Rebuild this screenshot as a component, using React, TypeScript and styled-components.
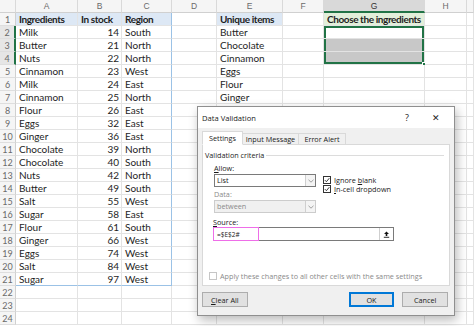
import React from 'react';
import styled, { createGlobalStyle } from 'styled-components';

const GlobalStyle = createGlobalStyle`
  html, body { margin: 0; padding: 0; background: #ffffff; }
  body { width: 474px; height: 326px; overflow: hidden; }
  * { box-sizing: border-box; }
`;

const Page = styled.div`
  position: relative;
  width: 474px;
  height: 326px;
  overflow: hidden;
  background: #fff;
`;

const Sheet = styled.div`
  display: grid;
  grid-template-columns: 16px 62px 44px 50px 45px 66px 41px 101px 42px 1fr;
  grid-auto-rows: 13px;
  font-family: Lato, 'Liberation Sans', sans-serif;
  font-size: 10px;
  color: #1e1e1e;
`;

const ColHead = styled.div<{ $sel?: boolean }>`
  display: flex;
  align-items: center;
  justify-content: center;
  background: ${p => (p.$sel ? '#d9d9d9' : '#f5f5f5')};
  border-right: 1px solid #d9d9d9;
  border-bottom: ${p => (p.$sel ? '2px solid #217346' : '1px solid #d0d0d0')};
  color: ${p => (p.$sel ? '#333' : '#6a6a6a')};
  font-size: 8.5px;
  font-family: 'Liberation Sans', sans-serif;
`;

const RowHead = styled.div<{ $sel?: boolean }>`
  display: flex;
  align-items: center;
  justify-content: center;
  background: ${p => (p.$sel ? '#e6e6e6' : '#f5f5f5')};
  border-right: ${p => (p.$sel ? '2px solid #217346' : '1px solid #d0d0d0')};
  border-bottom: 1px solid #dedede;
  color: #6a6a6a;
  font-size: 9px;
`;

type Edge = 'top' | 'right' | 'bottom' | 'left';

const Cell = styled.div<{
  $bold?: boolean;
  $right?: boolean;
  $bg?: string;
  $rb?: string;
  $bb?: string;
  $sel?: Edge[];
}>`
  position: relative;
  display: flex;
  align-items: center;
  justify-content: ${p => (p.$right ? 'flex-end' : 'flex-start')};
  padding: 0 2px 0 3px;
  white-space: nowrap;
  overflow: visible;
  font-weight: ${p => (p.$bold ? 700 : 400)};
  letter-spacing: ${p => (p.$bold ? '-0.4px' : '0')};
  background: ${p => p.$bg || '#fff'};
  border-right: 1px solid ${p => p.$rb || '#e3e3e3'};
  border-bottom: 1px solid ${p => p.$bb || '#e3e3e3'};
  box-shadow: ${p =>
    p.$sel && p.$sel.length
      ? p.$sel
          .map(e =>
            e === 'top'
              ? 'inset 0 2px 0 #217346'
              : e === 'bottom'
              ? 'inset 0 -2px 0 #217346'
              : e === 'left'
              ? 'inset 2px 0 0 #217346'
              : 'inset -2px 0 0 #217346'
          )
          .join(', ')
      : 'none'};
  z-index: ${p => (p.$bold ? 1 : 0)};
`;

const FillHandle = styled.span`
  position: absolute;
  right: -3px;
  bottom: -3px;
  width: 5px;
  height: 5px;
  background: #217346;
  border: 1px solid #fff;
  z-index: 2;
`;

/* ---------- Dialog ---------- */

const Dialog = styled.div`
  position: absolute;
  left: 197px;
  top: 106px;
  width: 258px;
  height: 210px;
  background: #f0f0f0;
  border: 1px solid #8f8f8f;
  box-shadow: 2px 4px 10px rgba(0, 0, 0, 0.28);
  display: flex;
  flex-direction: column;
  font-family: 'Open Sans', 'Noto Sans', sans-serif;
  font-size: 7.25px;
  color: #1a1a1a;
  z-index: 10;
`;

const TitleBar = styled.div`
  height: 21px;
  flex: none;
  background: #ffffff;
  display: flex;
  align-items: center;
  padding-left: 4px;
  font-size: 7.6px;
`;

const Title = styled.span`
  flex: 1;
`;

const TitleBtn = styled.span<{ $w: number }>`
  width: ${p => p.$w}px;
  display: flex;
  justify-content: center;
  align-items: center;
  font-size: 9px;
  color: #222;
`;

const Tabs = styled.div`
  display: flex;
  align-items: flex-end;
  margin: 3px 0 0 4px;
  height: 14px;
  flex: none;
  position: relative;
  z-index: 1;
`;

const Tab = styled.div<{ $active?: boolean; $w: number }>`
  width: ${p => p.$w}px;
  height: ${p => (p.$active ? 14 : 12)}px;
  display: flex;
  align-items: center;
  justify-content: center;
  background: ${p => (p.$active ? '#ffffff' : '#f0f0f0')};
  border: 1px solid #d9d9d9;
  border-left: ${p => (p.$active ? '1px solid #d9d9d9' : 'none')};
  border-bottom: ${p => (p.$active ? '1px solid #ffffff' : '1px solid #d9d9d9')};
`;

const Panel = styled.div`
  margin: -1px 4px 0 4px;
  height: 142px;
  flex: none;
  background: #ffffff;
  border: 1px solid #d9d9d9;
  display: flex;
  flex-direction: column;
  padding: 5px 3px 4px 2px;
`;

const Legend = styled.div`
  display: flex;
  align-items: center;
  height: 10px;
  gap: 2px;
  &::after {
    content: '';
    flex: 1;
    height: 1px;
    background: #dcdcdc;
    margin-right: 2px;
  }
`;

const Criteria = styled.div`
  display: flex;
  gap: 7px;
  padding-left: 9px;
  margin-top: 3px;
`;

const LeftCol = styled.div`
  display: flex;
  flex-direction: column;
  width: 102px;
`;

const RightCol = styled.div`
  display: flex;
  flex-direction: column;
  padding-top: 12px;
`;

const Label = styled.div<{ $disabled?: boolean; $mt?: number }>`
  height: 10px;
  line-height: 10px;
  margin-top: ${p => p.$mt || 0}px;
  color: ${p => (p.$disabled ? '#8a8a8a' : '#1a1a1a')};
`;

const Select = styled.div<{ $disabled?: boolean }>`
  margin-top: 1px;
  height: 13px;
  display: flex;
  border: 1px solid ${p => (p.$disabled ? '#cccccc' : '#7a7a7a')};
  background: ${p => (p.$disabled ? '#f0f0f0' : '#ffffff')};
  color: ${p => (p.$disabled ? '#8a8a8a' : '#1a1a1a')};
`;

const SelectText = styled.span`
  flex: 1;
  padding-left: 2px;
  line-height: 11px;
`;

const SelectBtn = styled.span`
  width: 10px;
  border-left: 1px solid #cfcfcf;
  display: flex;
  align-items: center;
  justify-content: center;
  background: #f4f4f4;
`;

const Check = styled.label`
  display: flex;
  align-items: center;
  height: 9px;
  gap: 3px;
`;

const Box = styled.span<{ $disabled?: boolean }>`
  width: 8px;
  height: 8px;
  flex: none;
  border: 1px solid ${p => (p.$disabled ? '#c6c6c6' : '#333333')};
  background: #ffffff;
  display: flex;
  align-items: center;
  justify-content: center;
`;

const U = styled.span`
  text-decoration: underline;
  text-underline-offset: 1px;
`;

const SourceArea = styled.div`
  padding-left: 8px;
  margin-top: 4px;
  display: flex;
  flex-direction: column;
`;

const SourceBox = styled.div`
  width: 181px;
  height: 14px;
  background: #ffffff;
  border: 1px solid #7a7a7a;
  display: flex;
  align-items: stretch;
`;

const Highlight = styled.span`
  width: 46px;
  border: 1px solid #ee6ee8;
  margin: -1px 0 -1px -1px;
  display: flex;
  align-items: center;
  padding-left: 3px;
  font-size: 6.5px;
`;

const RefBtn = styled.span`
  margin-left: auto;
  width: 14px;
  border-left: 1px solid #cfcfcf;
  display: flex;
  align-items: center;
  justify-content: center;
`;

const ApplyRow = styled(Check)`
  margin-top: auto;
  margin-left: 4px;
  height: 10px;
  color: #8a8a8a;
`;

const Footer = styled.div`
  display: flex;
  align-items: center;
  padding: 6px 6px 0 4px;
`;

const Button = styled.div<{ $default?: boolean; $ml?: string }>`
  width: 47px;
  height: 15px;
  display: flex;
  align-items: center;
  justify-content: center;
  background: #e1e1e1;
  border: 1px solid ${p => (p.$default ? '#0078d7' : '#adadad')};
  box-shadow: ${p => (p.$default ? 'inset 0 0 0 1px #0078d7' : 'none')};
  margin-left: ${p => p.$ml || '0'};
`;

const Chevron = () => (
  <svg width="6" height="4" viewBox="0 0 6 4">
    <path d="M0.5 0.8 L3 3.2 L5.5 0.8" fill="none" stroke="#8a8a8a" strokeWidth="0.8" />
  </svg>
);

const Tick = () => (
  <svg width="6" height="6" viewBox="0 0 6 6">
    <path d="M0.8 3.1 L2.4 4.7 L5.3 1.2" fill="none" stroke="#222" strokeWidth="0.9" />
  </svg>
);

const CollapseIcon = () => (
  <svg width="7" height="7" viewBox="0 0 7 7">
    <path d="M3.5 0.5 L6 3 L4.3 3 L4.3 5 L2.7 5 L2.7 3 L1 3 Z" fill="#111" />
    <rect x="0.8" y="5.8" width="5.4" height="0.9" fill="#111" />
  </svg>
);

const data: [string, number, string][] = [
  ['Milk', 14, 'South'],
  ['Butter', 21, 'North'],
  ['Nuts', 22, 'North'],
  ['Cinnamon', 23, 'West'],
  ['Milk', 24, 'East'],
  ['Cinnamon', 25, 'North'],
  ['Flour', 26, 'East'],
  ['Eggs', 32, 'East'],
  ['Ginger', 36, 'East'],
  ['Chocolate', 39, 'North'],
  ['Chocolate', 40, 'South'],
  ['Nuts', 42, 'North'],
  ['Butter', 49, 'South'],
  ['Salt', 55, 'West'],
  ['Sugar', 58, 'East'],
  ['Flour', 61, 'South'],
  ['Ginger', 66, 'West'],
  ['Eggs', 74, 'West'],
  ['Salt', 84, 'West'],
  ['Sugar', 97, 'West'],
];

const unique = ['Butter', 'Chocolate', 'Cinnamon', 'Eggs', 'Flour', 'Ginger'];

const cols = ['', 'A', 'B', 'C', 'D', 'E', 'F', 'G', 'H', ''];
const BLUE = '#9bc2e6';
const HEAD_BLUE = '#dde8f5';
const HEAD_GREEN = '#e2efda';

export default function App() {
  const rows: React.ReactNode[] = [];
  for (let r = 1; r <= 24; r++) {
    const d = r >= 2 && r <= 21 ? data[r - 2] : null;
    const inTable = r <= 21;
    const tableBottom = r === 21 ? BLUE : undefined;
    const sel = r >= 2 && r <= 4;
    rows.push(
      <React.Fragment key={r}>
        <RowHead $sel={sel}>{r}</RowHead>
        <Cell $bold={r === 1} $bg={r === 1 ? HEAD_BLUE : undefined} $bb={tableBottom}>
          {r === 1 ? 'Ingredients' : d ? d[0] : ''}
        </Cell>
        <Cell $bold={r === 1} $right={r !== 1} $bg={r === 1 ? HEAD_BLUE : undefined} $bb={tableBottom}>
          {r === 1 ? 'In stock' : d ? d[1] : ''}
        </Cell>
        <Cell
          $bold={r === 1}
          $bg={r === 1 ? HEAD_BLUE : undefined}
          $bb={tableBottom}
          $rb={inTable ? BLUE : undefined}
        >
          {r === 1 ? 'Region' : d ? d[2] : ''}
        </Cell>
        <Cell />
        <Cell $bold={r === 1} $bg={r === 1 ? HEAD_BLUE : undefined}>
          {r === 1 ? 'Unique items' : r <= 7 ? unique[r - 2] : ''}
        </Cell>
        <Cell />
        <Cell
          $bold={r === 1}
          $bg={r === 1 ? HEAD_GREEN : r === 3 || r === 4 ? '#c8c8c8' : undefined}
          $sel={
            r === 2
              ? ['top', 'left', 'right']
              : r === 3
              ? ['left', 'right']
              : r === 4
              ? ['left', 'right', 'bottom']
              : undefined
          }
        >
          {r === 1 ? 'Choose the ingredients' : ''}
          {r === 4 && <FillHandle />}
        </Cell>
        <Cell />
        <Cell />
      </React.Fragment>
    );
  }

  return (
    <Page>
      <GlobalStyle />
      <Sheet>
        {cols.map((c, i) => (
          <ColHead key={i} $sel={c === 'G'}>
            {c}
          </ColHead>
        ))}
        {rows}
      </Sheet>

      <Dialog>
        <TitleBar>
          <Title>Data Validation</Title>
          <TitleBtn $w={22}>?</TitleBtn>
          <TitleBtn $w={36}>✕</TitleBtn>
        </TitleBar>
        <Tabs>
          <Tab $active $w={41}>Settings</Tab>
          <Tab $w={56}>Input Message</Tab>
          <Tab $w={47}>Error Alert</Tab>
        </Tabs>
        <Panel>
          <Legend>Validation criteria</Legend>
          <Criteria>
            <LeftCol>
              <Label>
                <U>A</U>llow:
              </Label>
              <Select>
                <SelectText>List</SelectText>
                <SelectBtn>
                  <Chevron />
                </SelectBtn>
              </Select>
              <Label $disabled $mt={2}>
                Data:
              </Label>
              <Select $disabled>
                <SelectText>between</SelectText>
                <SelectBtn>
                  <Chevron />
                </SelectBtn>
              </Select>
            </LeftCol>
            <RightCol>
              <Check>
                <Box>
                  <Tick />
                </Box>
                <span>
                  Ignore <U>b</U>lank
                </span>
              </Check>
              <Check>
                <Box>
                  <Tick />
                </Box>
                <span>
                  <U>I</U>n-cell dropdown
                </span>
              </Check>
            </RightCol>
          </Criteria>
          <SourceArea>
            <Label>
              <U>S</U>ource:
            </Label>
            <SourceBox>
              <Highlight>=$E$2#</Highlight>
              <RefBtn>
                <CollapseIcon />
              </RefBtn>
            </SourceBox>
          </SourceArea>
          <ApplyRow>
            <Box $disabled />
            <span>Apply these changes to all other cells with the same settings</span>
          </ApplyRow>
        </Panel>
        <Footer>
          <Button>
            <span>
              <U>C</U>lear All
            </span>
          </Button>
          <Button $default $ml="101px">
            OK
          </Button>
          <Button $ml="8px">Cancel</Button>
        </Footer>
      </Dialog>
    </Page>
  );
}
